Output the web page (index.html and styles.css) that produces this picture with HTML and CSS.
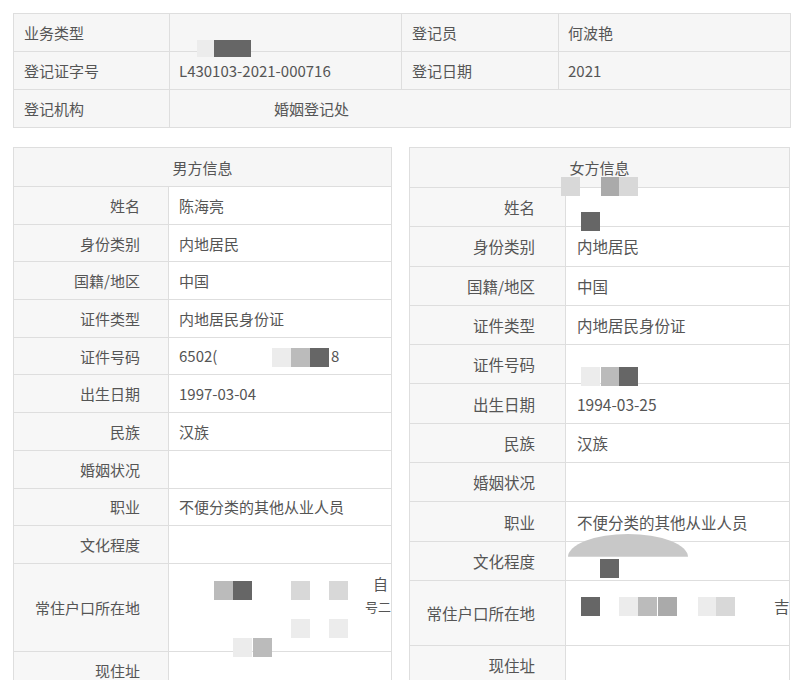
FILE: index.html
```html
<!DOCTYPE html>
<html lang="zh-CN">
<head>
    <meta charset="UTF-8">
    <title>婚姻登记信息</title>
    <link rel="stylesheet" href="styles.css">
</head>
<body>

    <!-- 登记基本信息 -->
    <table class="info-table">
        <tr>
            <td class="cell-label">业务类型</td>
            <td class="cell-value"><div class="mosaic-wrap">
                <span class="px faint" style="left:18px;top:26px;height:17px"></span>
                <span class="px dark" style="left:35px;top:26px;width:37px;height:17px"></span>
            </div></td>
            <td class="cell-label">登记员</td>
            <td class="cell-value">何波艳</td>
        </tr>
        <tr>
            <td class="cell-label">登记证字号</td>
            <td class="cell-value">L430103-2021-000716</td>
            <td class="cell-label">登记日期</td>
            <td class="cell-value">2021</td>
        </tr>
        <tr>
            <td class="cell-label">登记机构</td>
            <td class="cell-value" colspan="3"><span class="org-name">婚姻登记处</span></td>
        </tr>
    </table>

    <div class="person-row">
        <!-- 男方信息 -->
        <table class="person-table male">
            <colgroup><col class="col-label"><col></colgroup>
            <tr><th colspan="2">男方信息</th></tr>
            <tr><td class="p-label">姓名</td><td class="p-value">陈海亮</td></tr>
            <tr><td class="p-label">身份类别</td><td class="p-value">内地居民</td></tr>
            <tr><td class="p-label">国籍/地区</td><td class="p-value">中国</td></tr>
            <tr><td class="p-label">证件类型</td><td class="p-value">内地居民身份证</td></tr>
            <tr><td class="p-label">证件号码</td><td class="p-value"><div class="mosaic-wrap">6502(
                <span class="px faint" style="left:93px;top:3px"></span>
                <span class="px light" style="left:112px;top:3px"></span>
                <span class="px dark" style="left:131px;top:3px"></span>
                <span class="tail" style="left:152px">8</span>
            </div></td></tr>
            <tr><td class="p-label">出生日期</td><td class="p-value">1997-03-04</td></tr>
            <tr><td class="p-label">民族</td><td class="p-value">汉族</td></tr>
            <tr><td class="p-label">婚姻状况</td><td class="p-value"></td></tr>
            <tr><td class="p-label">职业</td><td class="p-value">不便分类的其他从业人员</td></tr>
            <tr><td class="p-label">文化程度</td><td class="p-value"></td></tr>
            <tr class="tall"><td class="p-label">常住户口所在地</td><td class="p-value"><div class="mosaic-wrap">
                <span class="px light" style="left:35px;top:-15px"></span>
                <span class="px dark" style="left:54px;top:-15px"></span>
                <span class="px pale" style="left:112px;top:-15px"></span>
                <span class="px pale" style="left:150px;top:-15px"></span>
                <span class="tail" style="left:194px;top:-23px">自</span>
                <span class="tail small" style="left:186px;top:0">号二</span>
                <span class="px faint" style="left:112px;top:23px"></span>
                <span class="px faint" style="left:150px;top:23px"></span>
                <span class="px faint" style="left:54px;top:42px"></span>
                <span class="px light" style="left:74px;top:42px"></span>
            </div></td></tr>
            <tr><td class="p-label">现住址</td><td class="p-value"></td></tr>
        </table>

        <!-- 女方信息 -->
        <table class="person-table female">
            <colgroup><col class="col-label"><col></colgroup>
            <tr><th colspan="2">女方信息</th></tr>
            <tr><td class="p-label">姓名</td><td class="p-value"><div class="mosaic-wrap">
                <span class="px pale" style="left:-16px;top:-19px"></span>
                <span class="px mid" style="left:24px;top:-19px"></span>
                <span class="px pale" style="left:42px;top:-19px"></span>
                <span class="px dark" style="left:4px;top:16px"></span>
            </div></td></tr>
            <tr><td class="p-label">身份类别</td><td class="p-value">内地居民</td></tr>
            <tr><td class="p-label">国籍/地区</td><td class="p-value">中国</td></tr>
            <tr><td class="p-label">证件类型</td><td class="p-value">内地居民身份证</td></tr>
            <tr><td class="p-label">证件号码</td><td class="p-value"><div class="mosaic-wrap">
                <span class="px faint" style="left:4px;top:14px"></span>
                <span class="px light" style="left:24px;top:14px"></span>
                <span class="px dark" style="left:42px;top:14px"></span>
            </div></td></tr>
            <tr><td class="p-label">出生日期</td><td class="p-value">1994-03-25</td></tr>
            <tr><td class="p-label">民族</td><td class="p-value">汉族</td></tr>
            <tr><td class="p-label">婚姻状况</td><td class="p-value"></td></tr>
            <tr><td class="p-label">职业</td><td class="p-value">不便分类的其他从业人员</td></tr>
            <tr><td class="p-label">文化程度</td><td class="p-value"><div class="mosaic-wrap">
                <span class="arc"></span>
                <span class="px dark" style="left:23px;top:9px"></span>
            </div></td></tr>
            <tr class="mid-tall"><td class="p-label">常住户口所在地</td><td class="p-value"><div class="mosaic-wrap">
                <span class="px dark" style="left:4px;top:-5px"></span>
                <span class="px faint" style="left:42px;top:-5px"></span>
                <span class="px light" style="left:61px;top:-5px"></span>
                <span class="px mid" style="left:81px;top:-5px"></span>
                <span class="px faint" style="left:121px;top:-5px"></span>
                <span class="px pale" style="left:139px;top:-5px"></span>
                <span class="tail" style="left:197px;top:-7px">吉</span>
            </div></td></tr>
            <tr><td class="p-label">现住址</td><td class="p-value"></td></tr>
        </table>
    </div>

</body>
</html>
```
FILE: styles.css
```css
body {
    font-family: "Noto Sans CJK SC", "Liberation Sans", sans-serif;
    background-color: #ffffff;
    color: #555;
    margin: 0;
    padding: 13px 10px 0 13px;
    font-size: 15px;
}
table {
    border-collapse: collapse;
}
td, th {
    border: 1px solid #dedede;
    font-weight: normal;
    padding: 0;
}
.info-table {
    width: 778px;
    table-layout: fixed;
}
.info-table td {
    height: 37px;
    background: #f6f6f6;
}
.info-table .cell-label {
    width: 145px;
    padding-left: 10px;
}
.info-table td:nth-child(2) {
    width: 222px;
}
.info-table td:nth-child(3) {
    width: 146px;
}
.info-table .cell-value {
    padding-left: 9px;
}
.info-table .mosaic-wrap {
    height: 0;
    top: -19px;
}
.org-name {
    margin-left: 95px;
}
.person-row {
    display: flex;
    align-items: flex-start;
    gap: 17px;
    margin-top: 19px;
}
.person-table {
    table-layout: fixed;
}
.person-table th {
    background: #f6f6f6;
    text-align: center;
    font-size: 15px;
}
.person-table .p-label {
    background: #f7f7f7;
    text-align: right;
    padding-right: 28px;
}
.person-table .p-value {
    background: #fff;
    padding-left: 10px;
}
.male {
    width: 380px;
}
.male .col-label {
    width: 155px;
}
.male th {
    height: 38px;
}
.male td {
    height: 36.7px;
}
.male tr.tall td {
    height: 87px;
}
.female {
    width: 382px;
    font-size: 15.5px;
}
.female .col-label {
    width: 156px;
}
.female th {
    height: 39px;
}
.female td {
    height: 38.3px;
}
.female .p-label {
    padding-right: 30px;
}
.female .p-value {
    padding-left: 11px;
}
.female tr.mid-tall td {
    height: 64px;
}

/* 马赛克遮挡 */
.mosaic-wrap {
    position: relative;
    height: 22px;
    line-height: 22px;
}
.px {
    position: absolute;
    width: 19px;
    height: 19px;
}
.px.dark {
    background: #666;
}
.px.mid {
    background: #aaa;
}
.px.light {
    background: #bbb;
}
.px.pale {
    background: #d8d8d8;
}
.px.faint {
    background: #ececec;
}
.tail {
    position: absolute;
    top: 0;
    white-space: nowrap;
}
.tail.small {
    font-size: 13px;
}
.arc {
    position: absolute;
    left: -9px;
    top: -16px;
    width: 120px;
    height: 46px;
    border-radius: 50%;
    background: #c8c8c8;
    clip-path: inset(0 0 50% 0);
}
```
